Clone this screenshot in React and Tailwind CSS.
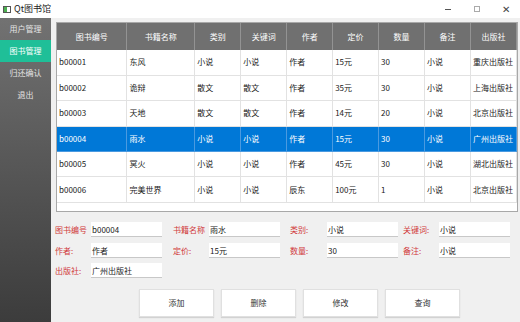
import React from "react";

const columns = [
  { title: "图书编号", w: 70 },
  { title: "书籍名称", w: 68 },
  { title: "类别", w: 46 },
  { title: "关键词", w: 46 },
  { title: "作者", w: 46 },
  { title: "定价", w: 46 },
  { title: "数量", w: 46 },
  { title: "备注", w: 46 },
  { title: "出版社", w: 46 },
];

const books = [
  ["b00001", "东风", "小说", "小说", "作者", "15元", "30", "小说", "重庆出版社"],
  ["b00002", "诡辩", "散文", "散文", "作者", "35元", "30", "小说", "上海出版社"],
  ["b00003", "天地", "散文", "散文", "作者", "14元", "20", "小说", "北京出版社"],
  ["b00004", "雨水", "小说", "小说", "作者", "15元", "30", "小说", "广州出版社"],
  ["b00005", "冥火", "小说", "小说", "作者", "45元", "30", "小说", "湖北出版社"],
  ["b00006", "完美世界", "小说", "小说", "辰东", "100元", "1", "小说", "北京出版社"],
];

const menu = ["用户管理", "图书管理", "归还确认", "退出"];

const fields = [
  [["图书编号", "b00004"], ["书籍名称", "雨水"], ["类别:", "小说"], ["关键词:", "小说"]],
  [["作者:", "作者"], ["定价:", "15元"], ["数量:", "30"], ["备注:", "小说"]],
  [["出版社:", "广州出版社"]],
];

function Field({ label, value }) {
  return (
    <>
      <div className="text-[8px] text-[#d0383a] leading-[15px] whitespace-nowrap">{label}</div>
      <div>
        <div className="w-[71px] h-[15px] bg-white border-b border-[#c8c8c8] px-[1px] text-[8px] leading-[15px] text-[#222]">
          {value}
        </div>
      </div>
    </>
  );
}

export default function App() {
  const selected = 3;

  return (
    <div
      className="w-[520px] h-[322px] flex flex-col bg-[#f0f0f0] overflow-hidden"
      style={{ fontFamily: '"Noto Sans CJK SC", "Noto Sans", sans-serif' }}
    >
      {/* title bar */}
      <div className="h-[18px] bg-white flex items-center shrink-0">
        <div className="ml-[3px] w-[8px] h-[7px] border border-[#555] flex">
          <div className="w-[3px] bg-[#4caf50]" />
        </div>
        <div className="ml-[3px] text-[9px] text-[#222]">Qt图书馆</div>
        <div className="ml-auto flex items-center text-[#444]">
          <div className="w-[6px] h-px bg-[#555] mr-[23px]" />
          <div className="w-[6px] h-[6px] border border-[#aaa] mr-[22px]" />
          <div className="text-[10px] leading-none mr-[10px]">✕</div>
        </div>
      </div>

      <div className="flex flex-1 min-h-0">
        {/* sidebar */}
        <div className="w-[51px] shrink-0 bg-gradient-to-b from-[#727272] to-[#3c3c3c] flex flex-col">
          {menu.map((m, i) => (
            <div
              key={m}
              className={
                "h-[22px] flex items-center justify-center text-[8px] " +
                (i === 1 ? "bg-[#1fbf98] text-white" : "text-[#e4e4e4]")
              }
            >
              {m}
            </div>
          ))}
        </div>

        {/* main */}
        <div className="flex-1 pl-[4px] pt-[4px]">
          <div className="ml-[1px] w-[462px] h-[190px] bg-white border border-[#a8a8a8] overflow-hidden">
            <table className="table-fixed border-collapse text-[8px]">
              <colgroup>
                {columns.map((c) => (
                  <col key={c.title} style={{ width: c.w }} />
                ))}
              </colgroup>
              <thead>
                <tr className="h-[27px] bg-[#707070] text-white">
                  {columns.map((c) => (
                    <th key={c.title} className="font-normal border-r border-[#939393] text-center">
                      {c.title}
                    </th>
                  ))}
                </tr>
              </thead>
              <tbody>
                {books.map((row, r) => (
                  <tr
                    key={row[0]}
                    className={
                      "h-[25.4px] " +
                      (r === selected ? "bg-[#0078d7] text-white" : "text-[#222]")
                    }
                  >
                    {row.map((cell, c) => (
                      <td
                        key={c}
                        className={
                          "px-[2px] border-b border-r whitespace-nowrap overflow-hidden " +
                          (r === selected ? "border-[#4a9ae0]" : "border-[#e2e2e2]")
                        }
                      >
                        {cell}
                      </td>
                    ))}
                  </tr>
                ))}
              </tbody>
            </table>
          </div>

          {/* form */}
          <div className="mt-[10px] grid grid-cols-[36px_82px_36px_81px_37px_76px_36px_71px] gap-y-[5.5px]">
            {fields.map((row, i) =>
              row.map(([label, value]) => (
                <Field key={i + label} label={label} value={value} />
              ))
            )}
          </div>

          {/* buttons */}
          <div className="mt-[11px] ml-[84px] flex gap-[7px]">
            {["添加", "删除", "修改", "查询"].map((b) => (
              <button
                key={b}
                className="w-[75px] h-[28px] bg-white border border-[#e0e0e0] shadow-[0_1px_1px_rgba(0,0,0,0.12)] text-[8px] text-[#333]"
              >
                {b}
              </button>
            ))}
          </div>
        </div>
      </div>
    </div>
  );
}
